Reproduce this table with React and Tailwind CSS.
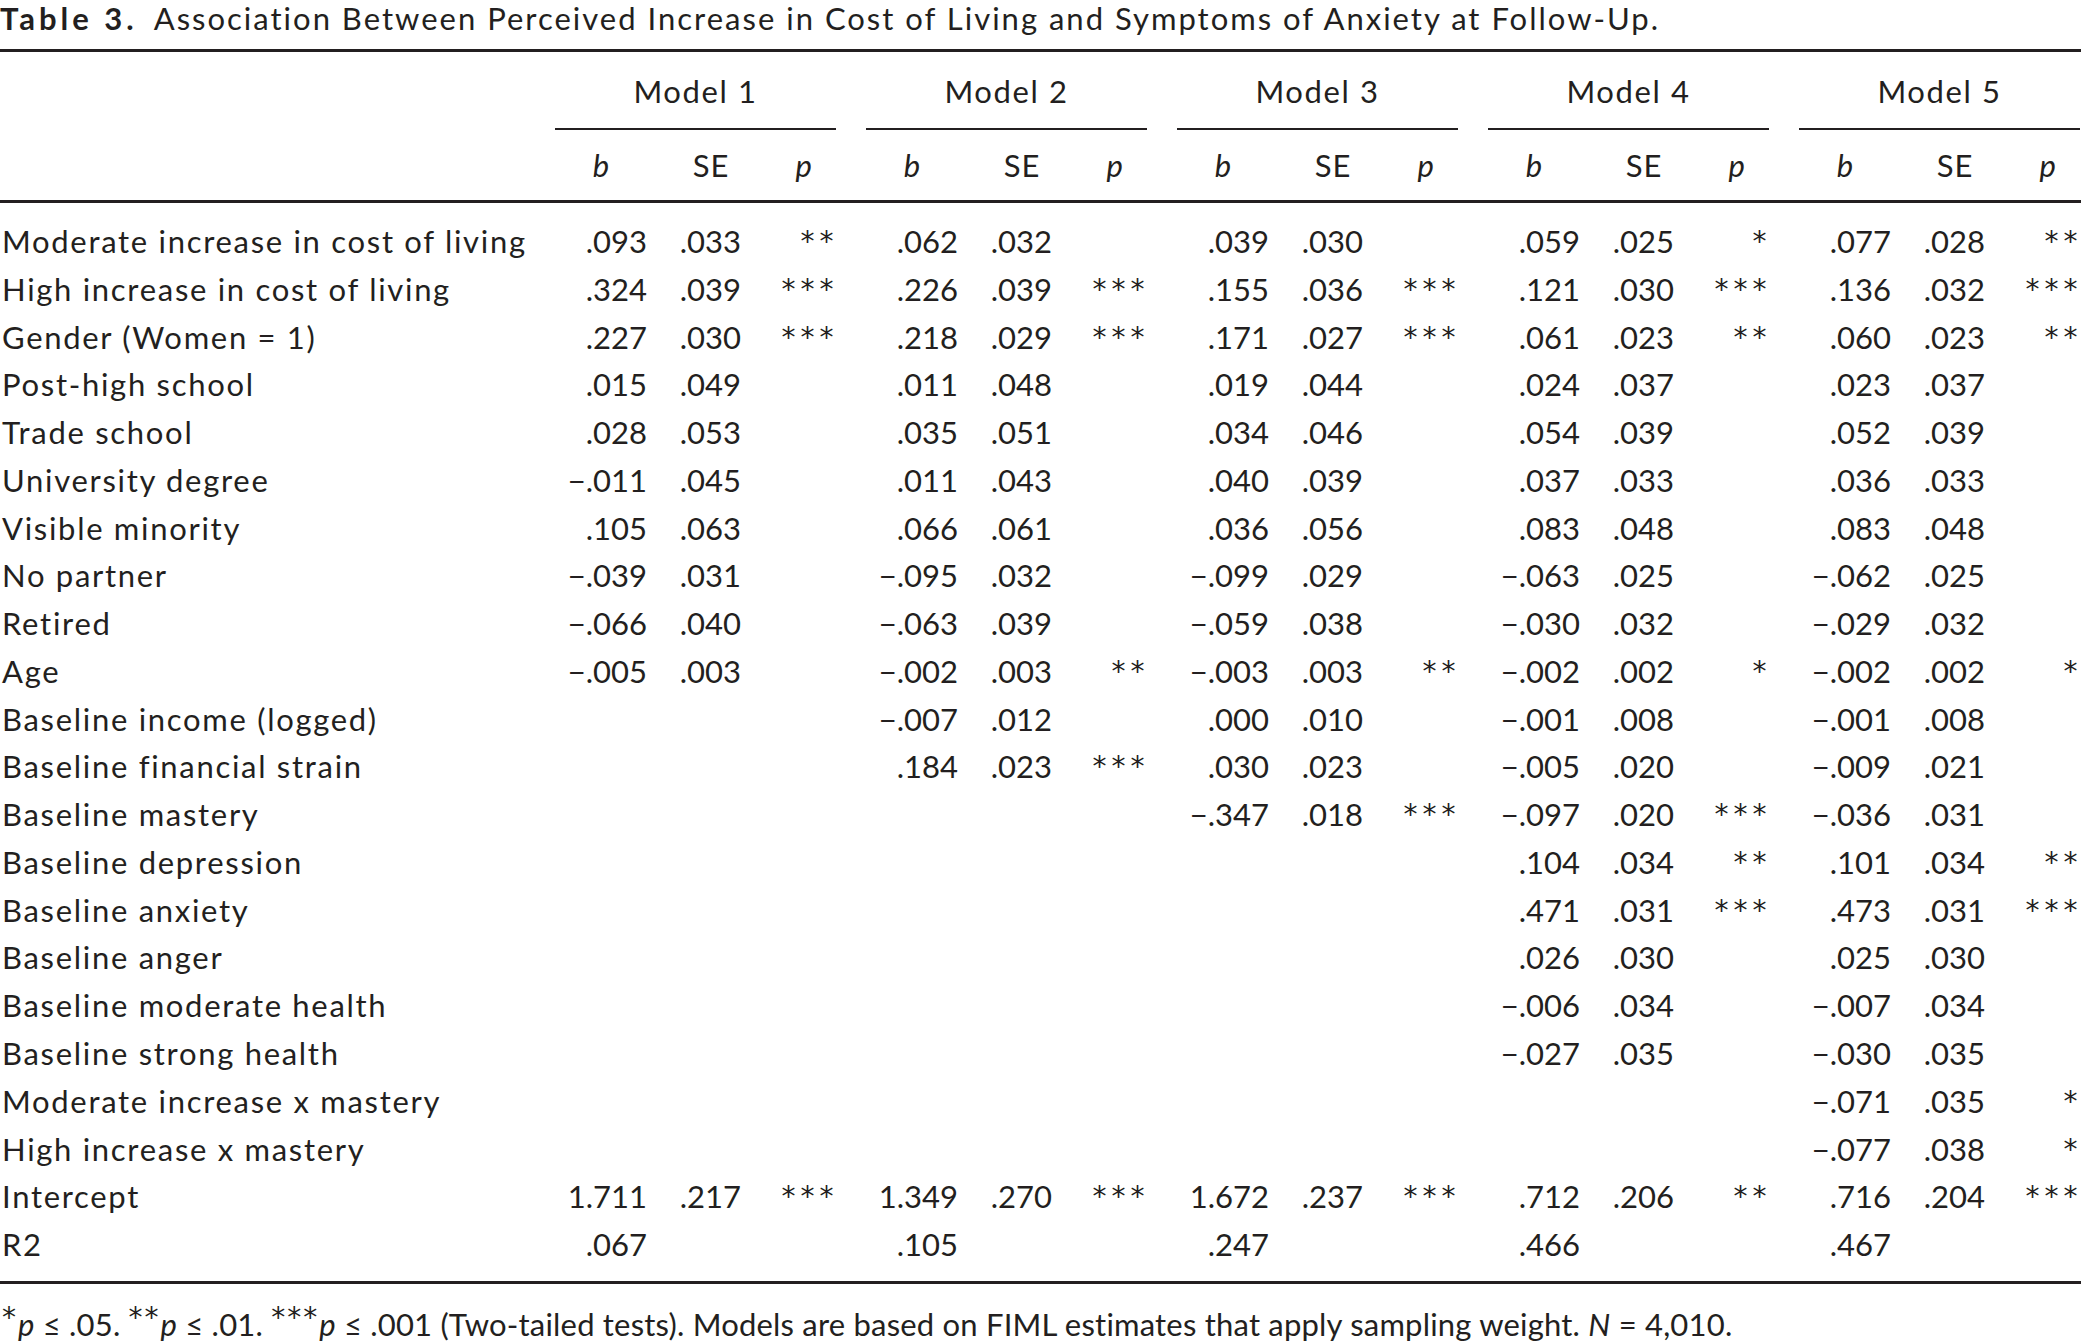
import React from "react";

const rows = [
  ["Moderate increase in cost of living", [[".093", ".033", "**"], [".062", ".032", ""], [".039", ".030", ""], [".059", ".025", "*"], [".077", ".028", "**"]]],
  ["High increase in cost of living", [[".324", ".039", "***"], [".226", ".039", "***"], [".155", ".036", "***"], [".121", ".030", "***"], [".136", ".032", "***"]]],
  ["Gender (Women = 1)", [[".227", ".030", "***"], [".218", ".029", "***"], [".171", ".027", "***"], [".061", ".023", "**"], [".060", ".023", "**"]]],
  ["Post-high school", [[".015", ".049", ""], [".011", ".048", ""], [".019", ".044", ""], [".024", ".037", ""], [".023", ".037", ""]]],
  ["Trade school", [[".028", ".053", ""], [".035", ".051", ""], [".034", ".046", ""], [".054", ".039", ""], [".052", ".039", ""]]],
  ["University degree", [["−.011", ".045", ""], [".011", ".043", ""], [".040", ".039", ""], [".037", ".033", ""], [".036", ".033", ""]]],
  ["Visible minority", [[".105", ".063", ""], [".066", ".061", ""], [".036", ".056", ""], [".083", ".048", ""], [".083", ".048", ""]]],
  ["No partner", [["−.039", ".031", ""], ["−.095", ".032", ""], ["−.099", ".029", ""], ["−.063", ".025", ""], ["−.062", ".025", ""]]],
  ["Retired", [["−.066", ".040", ""], ["−.063", ".039", ""], ["−.059", ".038", ""], ["−.030", ".032", ""], ["−.029", ".032", ""]]],
  ["Age", [["−.005", ".003", ""], ["−.002", ".003", "**"], ["−.003", ".003", "**"], ["−.002", ".002", "*"], ["−.002", ".002", "*"]]],
  ["Baseline income (logged)", [["", "", ""], ["−.007", ".012", ""], [".000", ".010", ""], ["−.001", ".008", ""], ["−.001", ".008", ""]]],
  ["Baseline financial strain", [["", "", ""], [".184", ".023", "***"], [".030", ".023", ""], ["−.005", ".020", ""], ["−.009", ".021", ""]]],
  ["Baseline mastery", [["", "", ""], ["", "", ""], ["−.347", ".018", "***"], ["−.097", ".020", "***"], ["−.036", ".031", ""]]],
  ["Baseline depression", [["", "", ""], ["", "", ""], ["", "", ""], [".104", ".034", "**"], [".101", ".034", "**"]]],
  ["Baseline anxiety", [["", "", ""], ["", "", ""], ["", "", ""], [".471", ".031", "***"], [".473", ".031", "***"]]],
  ["Baseline anger", [["", "", ""], ["", "", ""], ["", "", ""], [".026", ".030", ""], [".025", ".030", ""]]],
  ["Baseline moderate health", [["", "", ""], ["", "", ""], ["", "", ""], ["−.006", ".034", ""], ["−.007", ".034", ""]]],
  ["Baseline strong health", [["", "", ""], ["", "", ""], ["", "", ""], ["−.027", ".035", ""], ["−.030", ".035", ""]]],
  ["Moderate increase x mastery", [["", "", ""], ["", "", ""], ["", "", ""], ["", "", ""], ["−.071", ".035", "*"]]],
  ["High increase x mastery", [["", "", ""], ["", "", ""], ["", "", ""], ["", "", ""], ["−.077", ".038", "*"]]],
  ["Intercept", [["1.711", ".217", "***"], ["1.349", ".270", "***"], ["1.672", ".237", "***"], [".712", ".206", "**"], [".716", ".204", "***"]]],
  ["R2", [[".067", "", ""], [".105", "", ""], [".247", "", ""], [".466", "", ""], [".467", "", ""]]],
];

function Stars({ s, cls = "" }) {
  return (
    <span className={"font-['DejaVu_Sans',sans-serif] font-normal not-italic text-[28px] " + cls}>
      {s}
    </span>
  );
}

function Group({ cell }) {
  const [b, se, p] = cell;
  return (
    <div className="flex w-[281px] shrink-0">
      <div className="w-[92px] text-right">{b}</div>
      <div className="w-[94px] text-right">{se}</div>
      <div className="w-[95px] text-right">
        {p && <Stars s={p} cls="align-[9px] tracking-[5px] -mr-[2.5px]" />}
      </div>
    </div>
  );
}

export default function App() {
  return (
    <div className="w-[2081px] h-[1344px] bg-white text-[#231f20] font-['Lato',sans-serif] text-[31px] overflow-hidden">
      <div className="leading-[37px] pb-[12px] whitespace-nowrap">
        <span className="font-bold tracking-[4px] mr-[16px]">Table 3.</span>
        <span className="tracking-[2px]">
          Association Between Perceived Increase in Cost of Living and Symptoms of Anxiety at Follow-Up.
        </span>
      </div>
      <div className="border-t-[3px] border-[#231f20]" />
      <div className="flex pt-[15px]">
        <div className="w-[555px] shrink-0" />
        <div className="flex gap-[30px]">
          {[1, 2, 3, 4, 5].map((n) => (
            <div key={n} className="w-[281px] shrink-0">
              <div className="text-center leading-[48px] pb-[13px] tracking-[1.6px]">Model {n}</div>
              <div className="border-t-[2px] border-[#231f20]" />
            </div>
          ))}
        </div>
      </div>
      <div className="flex pt-[11px] pb-[11px] leading-[48px]">
        <div className="w-[555px] shrink-0" />
        <div className="flex gap-[30px]">
          {[1, 2, 3, 4, 5].map((n) => (
            <div key={n} className="flex w-[281px] shrink-0">
              <div className="w-[92px] text-center italic">b</div>
              <div className="w-[62px] ml-[33px] text-center tracking-[1px]">SE</div>
              <div className="flex-1 text-right pr-[24px] italic">p</div>
            </div>
          ))}
        </div>
      </div>
      <div className="border-t-[3px] border-[#231f20]" />
      <div className="pt-[15px] pb-[12px]">
        {rows.map(([label, cells]) => (
          <div key={label} className="flex leading-[47.77px] h-[47.77px] whitespace-nowrap">
            <div className="w-[555px] shrink-0 pl-[2px] tracking-[1.7px]">{label}</div>
            <div className="flex gap-[30px]">
              {cells.map((c, i) => (
                <Group key={i} cell={c} />
              ))}
            </div>
          </div>
        ))}
      </div>
      <div className="border-t-[3px] border-[#231f20]" />
      <div className="pt-[15px] leading-[37px] whitespace-nowrap pl-[2px] tracking-[0.2px]">
        <Stars s="*" cls="align-[9px] tracking-[2px]" />
        <i>p</i> ≤ .05. <Stars s="**" cls="align-[9px] tracking-[2px]" />
        <i>p</i> ≤ .01. <Stars s="***" cls="align-[9px] tracking-[2px]" />
        <i>p</i> ≤ .001 (Two-tailed tests). Models are based on FIML estimates that apply sampling weight. <i>N</i> = 4,010.
      </div>
    </div>
  );
}
